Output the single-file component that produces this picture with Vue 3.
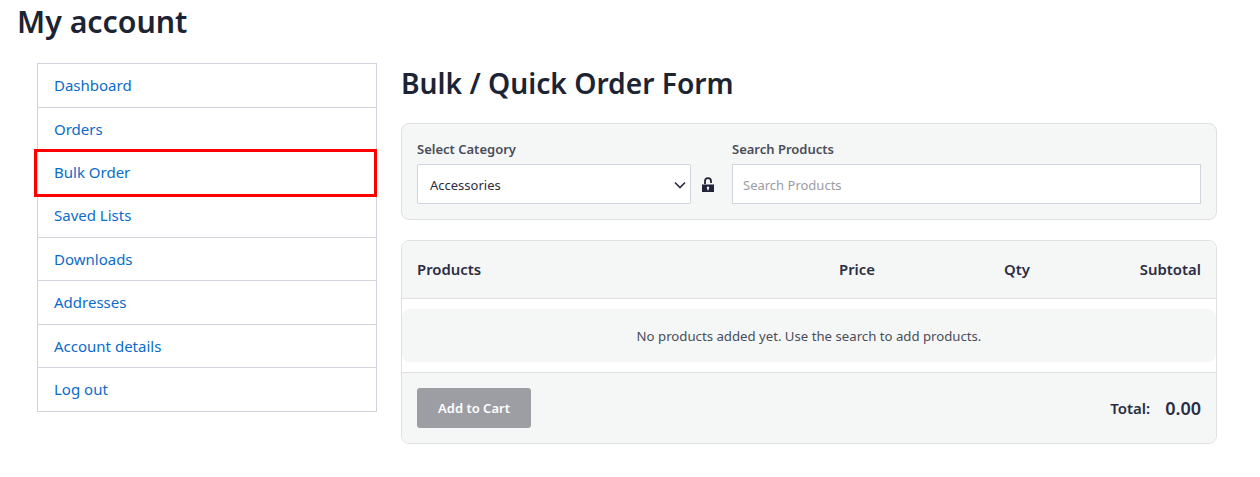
<template>
  <div class="page">
    <h1 class="title">My account</h1>

    <div class="columns">
      <nav class="side-nav">
        <a
          v-for="link in links"
          :key="link"
          href="#"
          class="side-link"
          :class="{ marked: link === 'Bulk Order' }"
        >{{ link }}</a>
      </nav>

      <main class="content">
        <h2 class="form-title">Bulk / Quick Order Form</h2>

        <div class="filters">
          <div class="field category">
            <label for="category">Select Category</label>
            <div class="select-box">
              <span id="category">Accessories</span>
              <svg class="chevron" viewBox="0 0 12 8" width="12" height="8">
                <path d="M1 1.500 6 6.500 11 1.500" fill="none" stroke="#2b2d42" stroke-width="1.600" />
              </svg>
            </div>
          </div>
          <svg class="lock" viewBox="0 0 14 16" width="14" height="16">
            <path d="M4 7V4.200a3 3 0 0 1 6 0V6" fill="none" stroke="#23233a" stroke-width="1.800" />
            <path d="M1 7.500h12V15H1zM7 9.500a1.200 1.200 0 0 0-.7 2.200V13.200h1.400v-1.500A1.200 1.200 0 0 0 7 9.500z" fill="#23233a" fill-rule="evenodd" />
          </svg>
          <div class="field search">
            <label for="search">Search Products</label>
            <input id="search" type="text" placeholder="Search Products" />
          </div>
        </div>

        <div class="order-table">
          <div class="table-head">
            <span class="col-products">Products</span>
            <span class="col-price">Price</span>
            <span class="col-qty">Qty</span>
            <span class="col-subtotal">Subtotal</span>
          </div>
          <div class="table-body">
            <p class="empty">No products added yet. Use the search to add products.</p>
          </div>
          <div class="table-foot">
            <button type="button" class="add-btn">Add to Cart</button>
            <div class="total">
              <span class="total-label">Total:</span>
              <span class="total-value">0.00</span>
            </div>
          </div>
        </div>
      </main>
    </div>
  </div>
</template>

<script setup>
const links = [
  'Dashboard',
  'Orders',
  'Bulk Order',
  'Saved Lists',
  'Downloads',
  'Addresses',
  'Account details',
  'Log out'
]
</script>

<style>
html,
body {
  margin: 0;
  background: #fff;
}
</style>

<style scoped>
.page {
  width: 1260px;
  height: 477px;
  overflow: hidden;
  font-family: "Noto Sans", "Open Sans", sans-serif;
  color: #1f2937;
  box-sizing: border-box;
}

.title {
  margin: 0;
  padding: 0 0 0 17px;
  height: 63px;
  font-size: 30.300px;
  line-height: 44px;
  font-weight: 600;
  color: #1c2434;
}

.columns {
  display: flex;
  padding-left: 37px;
  gap: 24px;
}

.side-nav {
  width: 340px;
  height: 349px;
  box-sizing: border-box;
  padding-top: 0.400px;
  border: 1px solid #d2d3dc;
  border-bottom: 0;
  display: flex;
  flex-direction: column;
}

.side-link {
  position: relative;
  display: flex;
  align-items: center;
  height: 43.400px;
  box-sizing: border-box;
  padding-left: 16px;
  padding-bottom: 0.600px;
  border-bottom: 1px solid #d2d3dc;
  font-size: 15px;
  color: #0b6bcb;
  text-decoration: none;
}

.side-link.marked::after {
  content: "";
  position: absolute;
  left: -4px;
  top: -2px;
  right: -1px;
  bottom: -3px;
  border: 3px solid #ff0000;
}

.content {
  width: 816px;
}

.form-title {
  margin: 0;
  height: 60px;
  font-size: 28.200px;
  line-height: 41px;
  font-weight: 600;
  color: #1c2434;
}

.filters {
  display: flex;
  align-items: flex-end;
  height: 97px;
  box-sizing: border-box;
  padding: 0 15px 15px;
  background: #f5f7f7;
  border: 1px solid #dfe1e1;
  border-radius: 8px;
}

.field {
  display: flex;
  flex-direction: column;
}

.field label {
  font-size: 13px;
  line-height: 18px;
  font-weight: 600;
  color: #4a4d57;
  margin-bottom: 6px;
}

.category {
  width: 274px;
}

.select-box {
  display: flex;
  align-items: center;
  justify-content: space-between;
  height: 40px;
  box-sizing: border-box;
  padding: 1px 4px 0 12px;
  background: #fff;
  border: 1px solid #d2d3dc;
  border-radius: 2px;
  font-size: 13px;
  color: #2b2d42;
}

.lock {
  margin: 0 17px 11px 10px;
  flex: none;
}

.search {
  flex: 1;
}

.search input {
  height: 40px;
  box-sizing: border-box;
  padding: 2px 10px 0;
  background: #fff;
  border: 1px solid #d2d3dc;
  border-radius: 0;
  font: inherit;
  font-size: 13px;
  outline: none;
}

.search input::placeholder {
  color: #9a9ca5;
}

.order-table {
  margin-top: 20px;
  height: 204px;
  box-sizing: border-box;
  border: 1px solid #dfe1e1;
  border-radius: 8px;
  overflow: hidden;
}

.table-head {
  display: flex;
  align-items: center;
  height: 58px;
  padding: 0 15px 2px;
  box-sizing: border-box;
  background: #f5f7f7;
  border-bottom: 1px solid #dfe1e1;
  font-size: 14.900px;
  font-weight: 600;
  color: #2b2d42;
}

.col-products {
  width: 340px;
}

.col-price {
  width: 118px;
  text-align: right;
}

.col-qty {
  width: 155px;
  text-align: right;
}

.col-subtotal {
  flex: 1;
  text-align: right;
}

.table-body {
  padding: 10px 0;
  background: #fff;
}

.empty {
  margin: 0;
  height: 53px;
  line-height: 55px;
  text-align: center;
  font-size: 13.200px;
  color: #4a4d57;
  background: #f5f7f7;
  border-radius: 8px;
}

.table-foot {
  display: flex;
  align-items: center;
  justify-content: space-between;
  height: 71px;
  box-sizing: border-box;
  padding: 0 15px;
  background: #f5f7f7;
  border-top: 1px solid #dfe1e1;
}

.add-btn {
  width: 114px;
  height: 40px;
  background: #9c9ea3;
  color: #fff;
  border: 0;
  border-radius: 3px;
  font: inherit;
  font-size: 13px;
  font-weight: 600;
}

.total {
  display: flex;
  align-items: center;
  gap: 15px;
  font-weight: 600;
  color: #2b2d42;
}

.total-label {
  font-size: 15px;
}

.total-value {
  font-size: 18px;
}
</style>
